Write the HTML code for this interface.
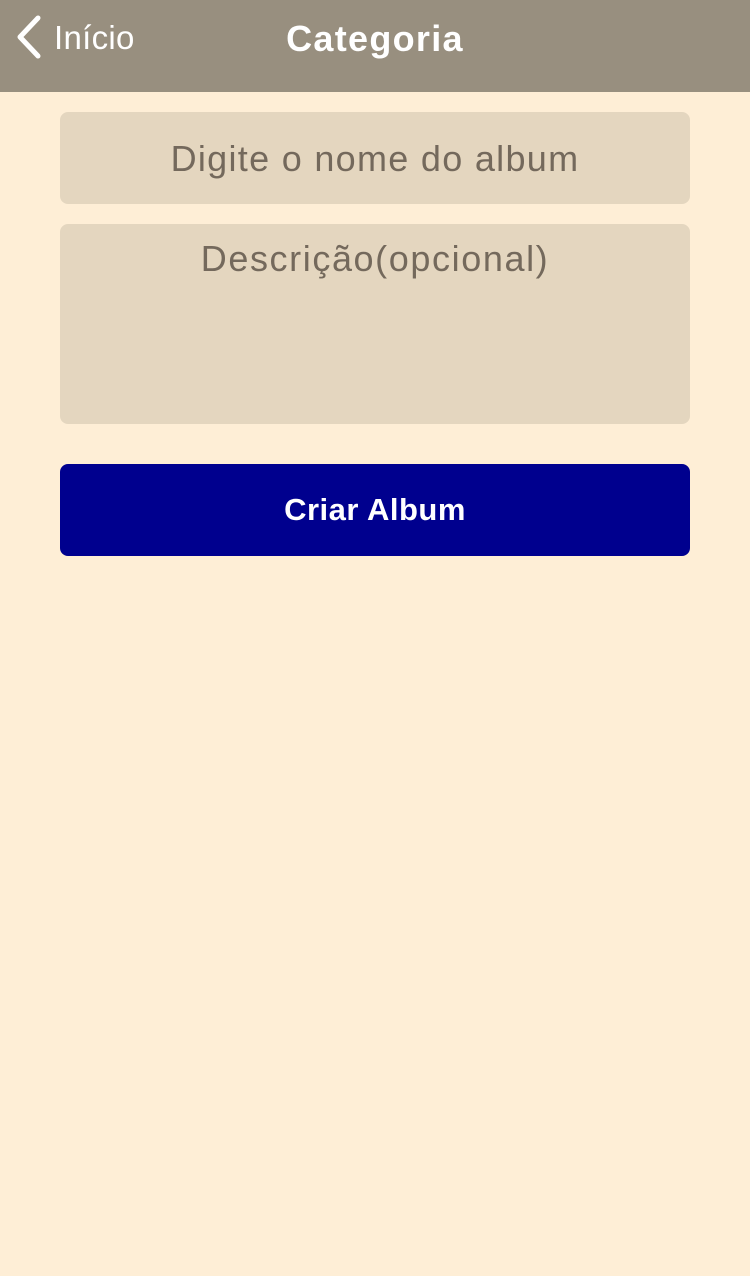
<!DOCTYPE html>
<html><head><meta charset="utf-8"><style>
body{margin:0;width:750px;height:1276px;background:#feeed6;font-family:"Liberation Sans",sans-serif;position:relative;overflow:hidden}
.hdr{position:absolute;left:0;top:0;width:750px;height:92px;background:#988f7f}
.back{position:absolute;left:54px;top:19px;font-size:33px;color:#fff;letter-spacing:0.3px}
.title{position:absolute;left:0;width:750px;top:18px;text-align:center;font-size:36px;font-weight:bold;color:#fff;letter-spacing:1.3px}
.box{position:absolute;left:60px;width:630px;background:#e4d6bf;border-radius:8px;color:#74695c;font-size:36px;text-align:center}
.btn{position:absolute;left:60px;top:464px;width:630px;height:92px;background:#00008e;border-radius:8px;color:#fff;font-weight:bold;font-size:31px;text-align:center;line-height:92px;letter-spacing:0.5px}
</style></head><body>
<div class="hdr">
<svg style="position:absolute;left:14px;top:14px" width="30" height="46"><path d="M24 4 L6 23 L24 42" stroke="#fff" stroke-width="5" fill="none" stroke-linecap="round" stroke-linejoin="round"/></svg>
<div class="back">Início</div>
<div class="title">Categoria</div>
</div>
<div class="box" style="top:112px;height:92px;line-height:94px;letter-spacing:1.3px">Digite o nome do album</div>
<div class="box" style="top:224px;height:200px;padding-top:14px;box-sizing:border-box;letter-spacing:1.6px">Descrição(opcional)</div>
<div class="btn">Criar Album</div>
</body></html>
